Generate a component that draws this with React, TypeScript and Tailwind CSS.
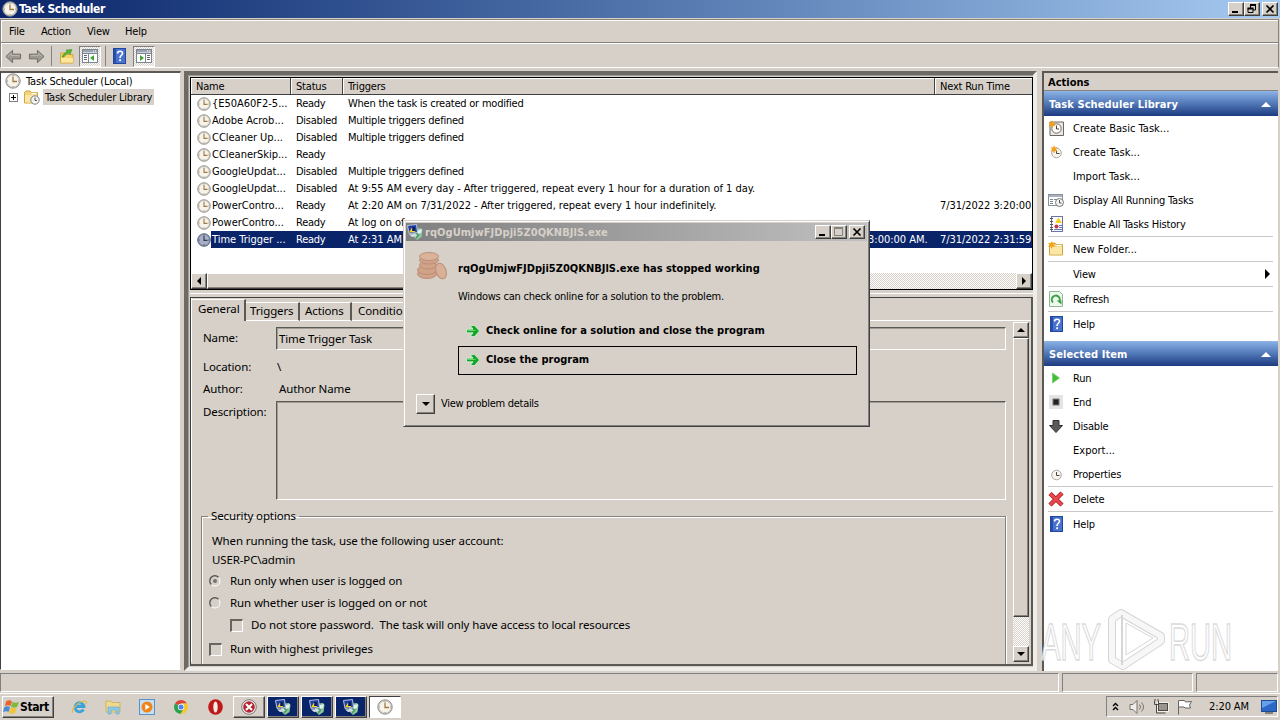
import type { ReactNode } from 'react'
import clsx from 'clsx'

interface Task {
  name: string
  status: string
  trigger: string
  next: string
}

const tasks: Task[] = [
  { name: '{E50A60F2-5...', status: 'Ready', trigger: 'When the task is created or modified', next: '' },
  { name: 'Adobe Acrob...', status: 'Disabled', trigger: 'Multiple triggers defined', next: '' },
  { name: 'CCleaner Up...', status: 'Disabled', trigger: 'Multiple triggers defined', next: '' },
  { name: 'CCleanerSkip...', status: 'Ready', trigger: '', next: '' },
  { name: 'GoogleUpdat...', status: 'Disabled', trigger: 'Multiple triggers defined', next: '' },
  { name: 'GoogleUpdat...', status: 'Disabled', trigger: 'At 9:55 AM every day - After triggered, repeat every 1 hour for a duration of 1 day.', next: '' },
  { name: 'PowerContro...', status: 'Ready', trigger: 'At 2:20 AM on 7/31/2022 - After triggered, repeat every 1 hour indefinitely.', next: '7/31/2022 3:20:00' },
  { name: 'PowerContro...', status: 'Ready', trigger: 'At log on of', next: '' },
  { name: 'Time Trigger ...', status: 'Ready', trigger: 'At 2:31 AM', next: '7/31/2022 2:31:59' },
]

const raised = 'border border-t-white border-l-white border-r-[#404040] border-b-[#404040] bg-[#d6d0c8] shadow-[inset_-1px_-1px_0_#87827b]'
const sunken = 'border border-t-[#808080] border-l-[#808080] border-r-white border-b-white'
const field = 'border border-t-[#5c5854] border-l-[#5c5854] border-r-white border-b-white shadow-[inset_1px_1px_0_#a09b95]'
const dither = 'bg-[repeating-conic-gradient(#ffffff_0_25%,#d6d0c8_0_50%)] bg-[length:2px_2px]'

function Clock({ size = 14, dark = false }: { size?: number; dark?: boolean }) {
  return (
    <svg width={size} height={size} viewBox="0 0 16 16" className="shrink-0">
      <circle cx="8" cy="8" r="7.2" fill={dark ? '#8f97ae' : '#cfccc6'} stroke={dark ? '#4b536b' : '#93908c'} />
      <circle cx="8" cy="8" r="5.6" fill={dark ? '#a9b0c5' : '#f7f3e8'} />
      <path d="M8 3.5V8.5H12" fill="none" stroke={dark ? '#2f3a5c' : '#a07c48'} strokeWidth="1.3" />
      <path d="M8 2v1M8 13v1M2 8h1M13 8h1" stroke={dark ? '#2f3a5c' : '#9d9a95'} />
    </svg>
  )
}

function Folder({ clock = false, star = false }: { clock?: boolean; star?: boolean }) {
  return (
    <svg width="17" height="16" viewBox="0 0 17 16" className="shrink-0">
      <path d="M1.5 14V3.5L3 2h4l1 1.5h6.5V14z" fill="#f3d27a" stroke="#cfa63f" />
      <path d="M2 6h12v7.5H2z" fill="#fbe7a3" />
      <path d="M8.5 4.5h5" stroke="#fff" strokeWidth="1.5" />
      {clock && (
        <>
          <circle cx="12" cy="11" r="4.2" fill="#f4f4f0" stroke="#7b8086" />
          <path d="M12 8.5V11.5H14" fill="none" stroke="#555" />
        </>
      )}
      {star && <path d="M3.5 0l1 2.3L7 2 5.5 4 7 6 4.500 5.500 3.500 8 2.500 5.500 0 6 1.500 4 0 2l2.500.3z" fill="#f5a31c" />}
    </svg>
  )
}

function HelpIcon() {
  return (
    <svg width="13" height="16" viewBox="0 0 13 16" className="shrink-0">
      <rect x=".5" y=".5" width="12" height="15" fill="#4a72cf" stroke="#23459d" />
      <path d="M1 1h2v14H1z" fill="#274fae" />
      <path d="M4.500 5.500C4.500 2.500 9.500 2.500 9.500 5.300 9.500 7.300 7 7.300 7 10" fill="none" stroke="#fff" strokeWidth="1.600" />
      <rect x="6.200" y="11.300" width="1.800" height="1.800" fill="#fff" />
    </svg>
  )
}

function PaneIcon({ flip = false }: { flip?: boolean }) {
  return (
    <svg width="16" height="14" viewBox="0 0 16 14">
      <rect x=".5" y=".5" width="15" height="13" fill="#fff" stroke="#7d8690" />
      <path d="M1 1h14v2.500H1z" fill="#9aa4b0" />
      <path d="M11 2h1M13 2h1" stroke="#fff" />
      <path d="M1 4.500h14" stroke="#7d8690" />
      <path d={flip ? 'M9.500 5v8.500' : 'M6.500 5v8.500'} stroke="#7d8690" />
      <path d={flip ? 'M11 6.500h3M11 8.500h3M11 10.500h3' : 'M2 6.500h3M2 8.500h3M2 10.500h3'} stroke="#5c6670" />
      <path d={flip ? 'M4 6l4 3-4 3z' : 'M12 6L8 9l4 3z'} fill="#3fa535" />
    </svg>
  )
}

function NavArrow({ right = false }: { right?: boolean }) {
  return (
    <svg width="17" height="15" viewBox="0 0 18 15" className={right ? 'scale-x-[-1]' : undefined}>
      <path d="M1 7.500L8 1v4h8.500v5H8v4z" fill="#9c9993" stroke="#6c6963" />
      <path d="M3 7.500L7 4v2.500h8" fill="none" stroke="#bcb9b3" />
    </svg>
  )
}

function AppIcon({ size = 16 }: { size?: number }) {
  return (
    <svg width={size} height={size} viewBox="0 0 16 16" className="shrink-0">
      <path d="M6 5l8-1 1.500 2-1 7-4.500 3-4-4z" fill="#8fc79c" />
      <path d="M9 8l4-1-1 5-3 3z" fill="#4b9a68" />
      <path d="M9 7l6-2-1 4-3 1z" fill="#dff0ee" />
      <path d="M.5 1.500l9-1 1 8-8.500 1z" fill="#1d3da8" stroke="#b8c4dd" />
      <path d="M2 8.500l3-5 3.500 4.500z" fill="#f2d92c" />
      <path d="M5.500 2.500l2.500 1v3.500H5z" fill="#111c55" />
      <path d="M2 10.500l7-.5 1.500 2-5.500 1z" fill="#d4dde6" />
    </svg>
  )
}

function Min() {
  return <svg width="10" height="10" viewBox="0 0 10 10"><path d="M1 7h6v2H1z" fill="#000" /></svg>
}

function Close() {
  return <svg width="10" height="10" viewBox="0 0 10 10"><path d="M1.500 1.500l7 7M8.500 1.500l-7 7" stroke="#000" strokeWidth="1.700" /></svg>
}

function WinButton({ children, className }: { children: ReactNode; className?: string }) {
  return <div className={clsx('flex h-[14px] w-4 items-center justify-center', raised, className)}>{children}</div>
}

function Arrow({ dir }: { dir: 'up' | 'down' | 'left' | 'right' }) {
  const d = { up: 'M4 2l4 4H0z', down: 'M0 2h8L4 6z', left: 'M2 4l4-4v8z', right: 'M6 4L2 0v8z' }[dir]
  return <svg width="8" height="8" viewBox="0 0 8 8"><path d={d} fill="#000" /></svg>
}

function GreenArrow() {
  return (
    <svg width="14" height="14" viewBox="0 0 14 14" className="shrink-0">
      <path d="M.5 5.200H7L4.300 1.500H8.500l5 5.500-5 5.500H4.300L7 8.800H.5z" fill="#12a52a" stroke="#d8f3d6" strokeWidth=".8" />
      <path d="M1.500 6.500h8" stroke="#5bdc62" />
    </svg>
  )
}

function MenuBar() {
  return (
    <div className="flex h-[23px] items-center border-b border-[#87827b] pl-[8px] pt-[2px] tracking-[-0.2px]">
      <span className="w-8">File</span>
      <span className="w-[46px]">Action</span>
      <span className="w-[38px]">View</span>
      <span>Help</span>
    </div>
  )
}

function Toolbar() {
  return (
    <div className="flex h-6 items-center border-t border-white pl-[4px] pt-px">
      <NavArrow />
      <div className="ml-[6px] flex"><NavArrow right /></div>
      <div className="ml-[6px] h-5 border-l border-[#87827b]" />
      <svg width="16" height="16" viewBox="0 0 16 16" className="ml-[7px]">
        <path d="M1.500 15V5h5l1.500 1.500h6V15z" fill="#f7d169" stroke="#d6a640" />
        <path d="M2 10h12v4.500H2z" fill="#fde79c" />
        <path d="M3 9c1-3 2.500-4 5-5L7 2l6-.5-2 5-1.200-1.500C7.500 6 6 7 5 9z" fill="#55b62f" stroke="#3a8f22" strokeWidth=".5" />
      </svg>
      <div className={clsx('ml-[4px] flex h-[21px] w-[22px] items-center justify-center', sunken, dither)}><PaneIcon /></div>
      <div className="ml-[4px] h-5 border-l border-[#87827b]" />
      <div className="ml-[7px]"><HelpIcon /></div>
      <div className={clsx('ml-[7px] flex h-[21px] w-[22px] items-center justify-center', sunken, dither)}><PaneIcon flip /></div>
    </div>
  )
}

function Tree() {
  return (
    <div className="h-[599px] w-[181px] border-l border-t-2 border-r border-b border-l-[#404040] border-t-[#5c5854] border-r-[#d6d0c8] border-b-white bg-white pl-1">
      <div className="flex h-4 items-center">
        <Clock size={16} />
        <span className="ml-1 pl-px pt-px tracking-[-0.18px]">Task Scheduler (Local)</span>
      </div>
      <div className="flex h-4 items-center pl-[4px]">
        <svg width="9" height="9" viewBox="0 0 9 9">
          <rect x=".5" y=".5" width="8" height="8" fill="#fff" stroke="#808080" />
          <path d="M2 4.500h5M4.500 2v5" stroke="#000" />
        </svg>
        <div className="ml-[5px]"><Folder clock /></div>
        <span className="ml-[3px] flex h-4 items-center bg-[#d6d0c8] px-[2px] pt-px tracking-[-0.2px]">Task Scheduler Library</span>
      </div>
    </div>
  )
}

function TaskList() {
  const head = 'flex h-[17px] items-center pl-[5px] pt-px border-r border-b border-[#404040] shadow-[inset_1px_1px_0_#fff] bg-[#d6d0c8]'
  return (
    <div className="h-[213px] w-[843px] overflow-hidden border border-black bg-white">
      <div className="grid grid-cols-[100px_52px_592px_98px] tracking-[-0.2px]">
        <div className={head}>Name</div>
        <div className={head}>Status</div>
        <div className={head}>Triggers</div>
        <div className={head}>Next Run Time</div>
      </div>
      {tasks.map((t, i) => (
        <div key={i} className={clsx('flex h-[17px] items-center', i === 8 && 'text-white')}>
          <div className="w-[20px] pl-[6px]"><Clock dark={i === 8} /></div>
          <div className={clsx('flex h-[17px] flex-1 items-center pt-px', i === 8 && 'bg-[#0a246a]')}>
            <span className="w-[85px] pl-px tracking-[-0.02px]">{t.name}</span>
            <span className="w-[52px] tracking-[-0.25px]">{t.status}</span>
            <span className={clsx(t.trigger.startsWith('At') ? 'tracking-[-0.03px]' : 'tracking-[-0.22px]', i === 8 ? 'w-[520px]' : 'w-[592px]')}>{t.trigger}</span>
            {i === 8 && <span className="w-[72px] tracking-[0px]">3:00:00 AM.</span>}
            <span className="tracking-[-0.05px]">{t.next}</span>
          </div>
        </div>
      ))}
      <div className={clsx('mt-[25px] flex h-4 justify-between', dither)}>
        <div className="flex">
          <div className={clsx('flex w-4 items-center justify-center', raised)}><Arrow dir="left" /></div>
          <div className={clsx('w-[520px]', raised)} />
        </div>
        <div className={clsx('flex w-4 items-center justify-center', raised)}><Arrow dir="right" /></div>
      </div>
    </div>
  )
}

function Radio({ on = false }: { on?: boolean }) {
  return (
    <svg width="12" height="12" viewBox="0 0 12 12" className="shrink-0">
      <circle cx="6" cy="6" r="5" fill="#d6d0c8" stroke="#fff" />
      <path d="M2.300 9.500A5 5 0 0 1 9.500 2.300" fill="none" stroke="#55514d" strokeWidth="1.400" />
      {on && <circle cx="6" cy="6" r="2" fill="#77736d" />}
    </svg>
  )
}

function Check() {
  return <div className="h-[13px] w-[13px] shrink-0 border-t-2 border-l-2 border-r border-b border-t-[#68645f] border-l-[#68645f] border-r-white border-b-white" />
}

function General() {
  const tab = 'flex h-[19px] items-center border-t border-white border-r-2 border-r-[#5c5854]'
  return (
    <div className="h-[369px] w-[843px] overflow-hidden border-t border-l border-t-[#404040] border-l-[#404040] border-r-2 border-r-[#5c5854] border-b-2 border-b-[#5c5854] bg-[#d6d0c8] font-['Noto_Sans',sans-serif] text-[11.5px] tracking-[-0.12px]">
      <div className="flex h-[23px] items-end border-l border-white">
        <div className="flex h-[22px] w-[54px] items-center border-t border-t-white border-r-2 border-r-[#5c5854] pb-[3px] pl-[6px]">General</div>
        <div className={clsx(tab, 'w-[54px] border-b pb-px pl-[4px]')}>Triggers</div>
        <div className={clsx(tab, 'w-[52px] border-b pb-px pl-[5px]')}>Actions</div>
        <div className={clsx(tab, 'w-[70px] border-b pb-px pl-[6px]')}>Conditions</div>
        <div className="h-px flex-1 bg-white" />
      </div>
      <div className="flex h-[341px] border-l border-white">
        <div className="w-[821px] pl-[11px]">
          <div className="flex pt-[6px]">
            <span className="w-[73px] leading-[22px]">Name:</span>
            <div className={clsx('h-[23px] w-[730px] pl-[2px] leading-[21px]', field)}>Time Trigger Task</div>
          </div>
          <div className="mt-[6px] flex h-[22px] items-center"><span className="w-[74px]">Location:</span>\</div>
          <div className="flex h-[22px] items-center"><span className="w-[76px]">Author:</span>Author Name</div>
          <div className="mt-px flex">
            <span className="w-[73px] leading-[21px]">Description:</span>
            <div className={clsx('h-[99px] w-[730px]', field)} />
          </div>
          <fieldset className="-ml-[2px] mt-[6px] h-[160px] w-[805px] border border-[#87827b] px-[7px] shadow-[inset_1px_1px_0_#fff,1px_0_0_#fff]">
            <legend className="-ml-px h-[20px] px-[3px] leading-[20px]">Security options</legend>
            <div className="mt-[6px] flex h-[18px] items-center pl-[3px]">When running the task, use the following user account:</div>
            <div className="flex h-5 items-center pl-[3px]">USER-PC\admin</div>
            <div className="flex h-[22px] items-center gap-[9px]"><Radio on />Run only when user is logged on</div>
            <div className="flex h-[22px] items-center gap-[9px]"><Radio />Run whether user is logged on or not</div>
            <div className="flex h-[22px] items-center gap-2 whitespace-pre pl-[21px]"><Check />{'Do not store password.  The task will only have access to local resources'}</div>
            <div className="mt-[2px] flex h-[22px] items-center gap-2"><Check />Run with highest privileges</div>
          </fieldset>
        </div>
        <div className={clsx('mt-px flex h-[340px] w-4 flex-col justify-between', dither)}>
          <div>
            <div className={clsx('flex h-4 items-center justify-center', raised)}><Arrow dir="up" /></div>
            <div className={clsx('h-[279px]', raised)} />
          </div>
          <div className={clsx('flex h-4 items-center justify-center', raised)}><Arrow dir="down" /></div>
        </div>
      </div>
    </div>
  )
}

function Star() {
  return <path d="M4 0l1 2.500L7.500 2 6 4l1.500 2.500L5 6 4 8.500 3 6 .5 6.500 2 4 .5 2 3 2.500z" fill="#f2a01d" />
}

function BasicTaskIcon() {
  return (
    <svg width="16" height="16" viewBox="0 0 16 16">
      <path d="M2 2h13.500v13.500H2z" fill="#ece8df" stroke="#6b6764" />
      <circle cx="8.500" cy="8.500" r="4.700" fill="#fff" stroke="#6f6b68" />
      <path d="M8.500 5.500v3.500H11" fill="none" stroke="#444" />
      <Star />
    </svg>
  )
}

function SmallClock({ star = false }: { star?: boolean }) {
  return (
    <svg width="16" height="16" viewBox="0 0 16 16">
      <circle cx="8.500" cy="9" r="4.800" fill="#f7f4ee" stroke="#aaa59e" />
      <path d="M8.500 6v3.500h3" fill="none" stroke="#4f4a44" />
      {star && <g transform="translate(2 1)"><Star /></g>}
    </svg>
  )
}

function RunningIcon() {
  return (
    <svg width="16" height="16" viewBox="0 0 16 16">
      <rect x=".5" y="2.500" width="14" height="11" fill="#fff" stroke="#88919a" />
      <path d="M1 3h13v2H1z" fill="#aab3bb" />
      <path d="M2 7.500h3M6 7.500h5M2 9.500h3M2 11.500h3" stroke="#7b858e" />
      <circle cx="11.500" cy="10.500" r="4" fill="#f3f3ef" stroke="#767b7e" />
      <path d="M11.500 8v3h2" fill="none" stroke="#555" />
    </svg>
  )
}

function HistoryIcon() {
  return (
    <svg width="15" height="16" viewBox="0 0 15 16">
      <rect x="2.500" y=".5" width="11" height="15" fill="#fbfbff" stroke="#6b74a6" />
      <path d="M1 2.500h3M1 5.500h3M1 8.500h3M1 11.500h3M1 13.500h3" stroke="#555" />
      <path d="M9.500 1.500l3.500 5.500H6z" fill="#f4d21c" />
      <circle cx="7.500" cy="10.500" r="2" fill="#cf3434" />
      <path d="M10 9.500h3M10 11.500h3M5 13.500h8" stroke="#6579bd" />
    </svg>
  )
}

function RefreshIcon() {
  return (
    <svg width="14" height="16" viewBox="0 0 14 16">
      <path d="M.5.5h10l3 3v12H.5z" fill="#eef8ee" stroke="#8fb795" />
      <path d="M4 11.500A4 4 0 1 1 10 11" fill="none" stroke="#38a342" strokeWidth="2" />
      <path d="M7.500 9.500h5v4z" fill="#38a342" />
    </svg>
  )
}

function ActionHeader({ title }: { title: string }) {
  return (
    <div className="flex h-[25px] items-center justify-between border-t border-[#8eb4e6] bg-[linear-gradient(#86aee3,#4f76b5_50%,#1c3a80)] pl-[5px] pr-[7px] pt-px text-[11px] font-bold tracking-[0.1px] text-white">
      {title}
      <svg width="10" height="5" viewBox="0 0 10 5"><path d="M5 0l5 5H0z" fill="#fff" /></svg>
    </div>
  )
}

function ActionItem({ icon, label, arrow, line }: { icon?: ReactNode; label: string; arrow?: boolean; line?: boolean }) {
  return (
    <div className={clsx('ml-[4px] mr-[5px] flex items-center', line ? 'h-[25px] border-b border-[#c9c9c9]' : 'h-6')}>
      <div className="flex w-[25px] justify-start"><div className="flex w-4 justify-center">{icon}</div></div>
      <span className={clsx('flex-1 pt-px', label.endsWith('...') ? 'tracking-[0.02px]' : 'tracking-[-0.18px]')}>{label}</span>
      {arrow && <svg width="6" height="10" viewBox="0 0 6 10" className="mr-[2px]"><path d="M0 0l5 5-5 5z" fill="#000" /></svg>}
    </div>
  )
}

function Actions() {
  return (
    <div className="h-[600px] w-[236px] border-l-2 border-t-2 border-[#5c5854] bg-white">
      <div className="h-[18px] border-b border-[#87827b] bg-[#d6d0c8] pl-[4px] pt-px text-[11px] font-bold leading-[17px]">Actions</div>
      <ActionHeader title="Task Scheduler Library" />
      <ActionItem icon={<BasicTaskIcon />} label="Create Basic Task..." />
      <ActionItem icon={<SmallClock star />} label="Create Task..." />
      <ActionItem label="Import Task..." />
      <ActionItem icon={<RunningIcon />} label="Display All Running Tasks" />
      <ActionItem icon={<HistoryIcon />} label="Enable All Tasks History" line />
      <ActionItem icon={<Folder star />} label="New Folder..." line />
      <ActionItem label="View" arrow line />
      <ActionItem icon={<RefreshIcon />} label="Refresh" line />
      <ActionItem icon={<HelpIcon />} label="Help" />
      <div className="h-[5px]" />
      <ActionHeader title="Selected Item" />
      <ActionItem icon={<svg width="10" height="12" viewBox="0 0 10 12"><path d="M1.500 1l7 5-7 5z" fill="#43bd37" stroke="#7bd373" /></svg>} label="Run" />
      <ActionItem icon={<svg width="14" height="14" viewBox="0 0 14 14"><rect width="14" height="14" fill="#e4e4e4" /><rect x="4" y="4" width="6" height="6" fill="#222" stroke="#777" /></svg>} label="End" />
      <ActionItem icon={<svg width="14" height="13" viewBox="0 0 14 13"><path d="M4 .5h6v5h3.500L7 12.500.5 5.500H4z" fill="#5a5a5a" stroke="#333" /></svg>} label="Disable" />
      <ActionItem label="Export..." />
      <ActionItem icon={<SmallClock />} label="Properties" line />
      <ActionItem icon={<svg width="16" height="16" viewBox="0 0 16 16"><path d="M2 2.500l12 11.500M14 2L2 14" stroke="#a81c22" strokeWidth="4.500" /><path d="M2 2.500l12 11.500M14 2L2 14" stroke="#e8484c" strokeWidth="3" /></svg>} label="Delete" line />
      <ActionItem icon={<HelpIcon />} label="Help" />
    </div>
  )
}

function ErrorDialog() {
  return (
    <div className="absolute left-[403px] top-[220px] h-[207px] w-[467px] border border-t-[#d6d0c8] border-l-[#d6d0c8] border-r-[#404040] border-b-[#404040] bg-[#d6d0c8] p-[2px] shadow-[inset_1px_1px_0_#fff,inset_-1px_-1px_0_#808080]">
      <div className="flex h-[18px] items-center bg-linear-to-r from-[#808080] to-[#c0c0c0] pl-px pr-[2px] text-[11px] font-bold text-[#d6d0c8]">
        <AppIcon />
        <span className="ml-[2px] flex-1 pt-px tracking-[0.05px]">rqOgUmjwFJDpji5Z0QKNBJlS.exe</span>
        <WinButton><Min /></WinButton>
        <WinButton>
          <svg width="10" height="10" viewBox="0 0 10 10"><path d="M.5 1.500h8v7h-8z" fill="none" stroke="#87827b" /><path d="M0 1h9" stroke="#87827b" strokeWidth="2" /></svg>
        </WinButton>
        <WinButton className="ml-[2px]"><Close /></WinButton>
      </div>
      <div className="flex pl-[10px] pt-[10px]">
        <svg width="32" height="30" viewBox="0 0 32 30">
          <g fill="#cf9a7c" stroke="#b98468" opacity=".85">
            <ellipse cx="11" cy="23" rx="9.500" ry="4.500" />
            <ellipse cx="11" cy="19" rx="9.500" ry="4.500" />
            <ellipse cx="12" cy="14" rx="8.500" ry="4" />
            <ellipse cx="13" cy="9" rx="9.500" ry="4" />
            <ellipse cx="13" cy="5.500" rx="9.500" ry="4" fill="#dcae94" />
            <ellipse cx="25" cy="20" rx="5" ry="8" transform="rotate(-20 25 20)" fill="#d9aa8f" />
          </g>
        </svg>
        <div className="ml-[10px]">
          <div className="mt-[10px] h-4 text-[11px] font-bold leading-4">rqOgUmjwFJDpji5Z0QKNBJlS.exe has stopped working</div>
          <div className="mt-3 h-4 leading-4 tracking-[-0.23px]">Windows can check online for a solution to the problem.</div>
          <div className="mt-3 flex h-[28px] items-center pl-2 text-[11px] font-bold"><GreenArrow /><span className="ml-[6px]">Check online for a solution and close the program</span></div>
          <div className="mt-px flex h-[29px] w-[399px] items-center border border-black pb-px pl-[7px] text-[11px] font-bold"><GreenArrow /><span className="ml-[6px]">Close the program</span></div>
        </div>
      </div>
      <div className="ml-[10px] mt-[19px] flex items-center">
        <div className={clsx('flex h-5 w-[19px] items-center justify-center', raised)}><Arrow dir="down" /></div>
        <span className="ml-[6px] tracking-[-0.3px]">View problem details</span>
      </div>
    </div>
  )
}

function Watermark() {
  return (
    <svg width="210" height="76" viewBox="0 0 210 76" className="absolute left-[1038px] top-[603px] overflow-visible opacity-85">
      <g fill="#ffffff" stroke="#d4d4d4" strokeWidth="1.500" fontFamily="Liberation Sans, sans-serif" fontSize="52">
        <text transform="translate(3 57) scale(.56 1)">ANY</text>
        <text transform="translate(131 57) scale(.56 1)">RUN</text>
      </g>
      <g fill="none" strokeLinejoin="round">
        <path d="M83 10l40 23v5L85 63l-11-6V16z" stroke="#cfcfcf" strokeWidth="8" />
        <path d="M83 10l40 23v5L85 63l-11-6V16z" stroke="#f6f6f6" strokeWidth="6" />
        <path d="M84 12v50" stroke="#cfcfcf" strokeWidth="2" />
        <path d="M88 20v32l27-17z" stroke="#d0d0d0" />
      </g>
    </svg>
  )
}

function Slot({ children }: { children: ReactNode }) {
  return <div className="flex w-[34px] items-center justify-center">{children}</div>
}

function TaskButton({ children, blue = false }: { children: ReactNode; blue?: boolean }) {
  return <div className={clsx('mr-[2px] flex h-[22px] w-8 items-center justify-center', raised, blue && 'bg-[#0a246a]!')}>{children}</div>
}

function Taskbar() {
  return (
    <div className="flex h-[26px] items-center border-t border-white pl-[2px]">
      <div className={clsx('flex h-[22px] w-[52px] items-center text-[12px] font-bold', raised)}>
        <svg width="17" height="16" viewBox="0 0 17 16">
          <path d="M3 2.500q3-2.500 6 0L7.500 7q-2.500-1.500-5.500 0z" fill="#e8642c" />
          <path d="M9.500 3q3 1.500 6.500 0l-2 5q-3 1-6 0z" fill="#7dba3c" />
          <path d="M1.500 8q3-1.500 5.500 0L5.500 13q-2-1.500-5.500 0z" fill="#4a8bd6" />
          <path d="M7.500 8.800q3 1.500 6 0L12 14q-3 1-6 0z" fill="#f4c431" />
        </svg>
        <span className="tracking-[-0.4px]">Start</span>
      </div>
      <div className="ml-2 flex">
        <Slot>
          <svg width="17" height="16" viewBox="0 0 17 16">
            <path d="M12.500 10.500A4.500 4.500 0 1 1 13 7.500H5" fill="none" stroke="#3ba2dd" strokeWidth="2.800" />
            <path d="M2 13.500C-1 11 8 2 14 2q2.500.5 1 3.500" fill="none" stroke="#e2bd3e" strokeWidth="1.200" />
          </svg>
        </Slot>
        <Slot>
          <svg width="17" height="16" viewBox="0 0 17 16">
            <path d="M1 13V2h5l1 1.500h8V13z" fill="#eed98d" stroke="#cdb667" />
            <path d="M3 15V8h11v7h-3v-4H6v4z" fill="#8ec9e8" stroke="#62a6cb" strokeWidth=".6" />
          </svg>
        </Slot>
        <Slot>
          <svg width="16" height="16" viewBox="0 0 16 16">
            <rect x=".5" y=".5" width="15" height="15" fill="#c5dff5" stroke="#5a92c8" />
            <circle cx="8" cy="8" r="5.500" fill="#f08418" />
            <path d="M6.300 5l4.500 3-4.500 3z" fill="#fff" />
          </svg>
        </Slot>
        <Slot>
          <svg width="14" height="14" viewBox="0 0 14 14">
            <path d="M7 7L1 3.500A7 7 0 0 1 13 3.500H7z" fill="#dc4437" />
            <path d="M7 7L1 3.500A7 7 0 0 0 6.500 14L10 9z" fill="#2da14d" />
            <path d="M7 3.500h6A7 7 0 0 1 6.500 14L10 8z" fill="#f6c72e" />
            <circle cx="7" cy="7" r="3.200" fill="#fff" />
            <circle cx="7" cy="7" r="2.500" fill="#4a86e8" />
          </svg>
        </Slot>
        <Slot>
          <svg width="15" height="16" viewBox="0 0 15 16">
            <ellipse cx="7.500" cy="8" rx="7.300" ry="7.800" fill="#c01818" />
            <ellipse cx="7.500" cy="8" rx="2.200" ry="5.500" fill="#f4eaea" />
          </svg>
        </Slot>
      </div>
      <div className="ml-px flex">
        <TaskButton>
          <svg width="16" height="16" viewBox="0 0 16 16">
            <circle cx="8" cy="8" r="7.300" fill="#f4f0ee" stroke="#777" />
            <circle cx="8" cy="8" r="5.800" fill="#b32630" />
            <path d="M5 5l6 6M11 5l-6 6" stroke="#fff" strokeWidth="2" />
          </svg>
        </TaskButton>
        <TaskButton blue><AppIcon /></TaskButton>
        <TaskButton blue><AppIcon /></TaskButton>
        <TaskButton blue><AppIcon /></TaskButton>
        <div className="flex h-[22px] w-8 items-center justify-center border border-t-[#404040] border-l-[#404040] border-r-white border-b-white bg-white"><Clock size={16} /></div>
      </div>
      <div className={clsx('ml-auto mr-[2px] flex h-[21px] w-[172px] items-center pl-[5px]', sunken)}>
        <svg width="7" height="10" viewBox="0 0 7 10"><path d="M1 4l2.500-2.500L6 4M1 8l2.500-2.500L6 8" fill="none" stroke="#000" strokeWidth="1.400" /></svg>
        <svg width="18" height="16" viewBox="0 0 18 16" className="ml-[10px]">
          <path d="M1 5.500h3l4-4v13l-4-4H1z" fill="#eee" stroke="#77736d" />
          <path d="M10.500 5.500q2 2.500 0 5M12.500 3.500q4 4.500 0 9" fill="none" stroke="#77736d" />
        </svg>
        <svg width="17" height="16" viewBox="0 0 17 16" className="ml-[6px]">
          <rect x="4.500" y="3.500" width="11" height="9" fill="#8b8780" stroke="#f3f1ee" />
          <rect x="5.500" y="4.500" width="9" height="7" fill="#9a958e" stroke="#4c4945" />
          <path d="M1.500 2v3.500h4V2M3.500 5.500V14h9" fill="none" stroke="#4c4945" />
          <path d="M2 0v2M5 0v2" stroke="#4c4945" />
        </svg>
        <svg width="17" height="16" viewBox="0 0 17 16" className="ml-[6px]">
          <path d="M2.500 15.500V1.500h6l1 1.500 6-.5-2 3.500 1 3H9L8 8H3" fill="#fff" stroke="#69655f" />
        </svg>
        <span className="ml-[16px] pt-px tracking-[-0.1px]">2:20 AM</span>
        <svg width="16" height="14" viewBox="0 0 16 14" className="ml-auto">
          <rect x=".5" y=".5" width="15" height="11" fill="#2c67c8" stroke="#224a8e" />
          <path d="M1 1h14L1 8z" fill="#66a0ec" />
          <path d="M4 13h8" stroke="#333" />
        </svg>
      </div>
    </div>
  )
}

export default function App() {
  return (
    <div className="relative h-[720px] w-[1280px] overflow-hidden whitespace-nowrap bg-[#d6d0c8] font-['DejaVu_Sans_Condensed','DejaVu_Sans',sans-serif] text-[11px] leading-4 text-black">
      <div className="flex h-[18px] items-center bg-linear-to-r from-[#0a246a] to-[#a6caf0] pl-[2px] pr-[2px] text-[12px] font-bold text-white">
        <Clock size={16} />
        <span className="ml-px flex-1 tracking-[-0.4px]">Task Scheduler</span>
        <WinButton><Min /></WinButton>
        <WinButton>
          <svg width="10" height="10" viewBox="0 0 10 10"><path d="M3.500 4V1h5v5H6M1 4.500h5v4H1z" fill="none" stroke="#000" /><path d="M3 1h6M.5 4.500h6" stroke="#000" strokeWidth="1.800" /></svg>
        </WinButton>
        <WinButton className="ml-[2px]"><Close /></WinButton>
      </div>
      <div className="mr-[1px] mt-px border border-t-[#87827b] border-l-[#87827b] border-r-[#87827b] border-b-white shadow-[inset_1px_1px_0_#fff]">
        <MenuBar />
        <Toolbar />
      </div>
      <div className="mt-[3px] flex h-[602px]">
        <Tree />
        <div className="ml-[3px] h-[600px] w-[853px] border-4 border-t-[#6d6964] border-l-[#6d6964] border-r-[#efedea] border-b-[#efedea] pl-[2px] pt-[2px] shadow-[inset_1px_1px_0_#a09b95]">
          <TaskList />
          <div className="my-[3px] h-px w-[843px] bg-white" />
          <General />
        </div>
        <div className="ml-[5px]"><Actions /></div>
      </div>
      <div className="flex h-[19px] gap-[3px]">
        <div className={clsx('w-[1059px]', sunken)} />
        <div className={clsx('w-[131px]', sunken)} />
        <div className={clsx('w-[82px]', sunken)} />
      </div>
      <div className="mt-px"><Taskbar /></div>
      <ErrorDialog />
      <Watermark />
    </div>
  )
}
